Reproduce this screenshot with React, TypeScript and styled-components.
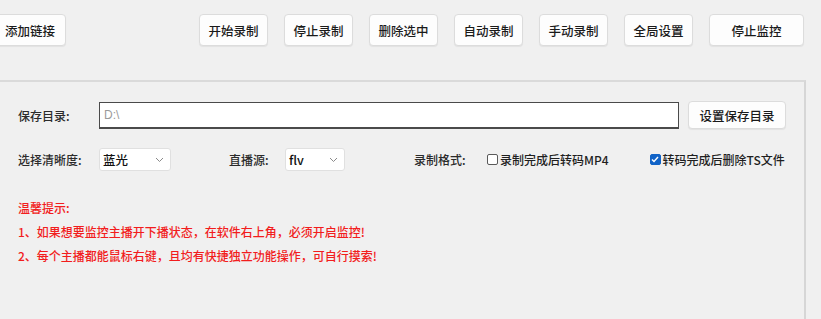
import styled, { createGlobalStyle } from 'styled-components';

const GlobalStyle = createGlobalStyle`
  html, body {
    margin: 0;
    padding: 0;
    background: #f0f0f0;
    overflow: hidden;
  }
  body {
    font-family: "Noto Sans CJK SC", "Microsoft YaHei", "Liberation Sans", sans-serif;
    font-size: 12px;
    color: #1f1f1f;
  }
`;

const Window = styled.div`
  width: 821px;
  height: 319px;
  background: #f0f0f0;
  display: flex;
  flex-direction: column;
  overflow: hidden;
`;

const Toolbar = styled.div`
  height: 80px;
  display: flex;
  align-items: flex-start;
  padding-top: 14px;
  box-sizing: border-box;
`;

const ToolGroup = styled.div`
  display: flex;
  gap: 16px;
  margin-left: auto;
  margin-right: 17px;
`;

const ToolButton = styled.button<{ $width?: number }>`
  width: ${({ $width }) => $width ?? 69}px;
  height: 32px;
  padding: 0;
  background: #fdfdfd;
  border: 1px solid #dcdcdc;
  border-radius: 4px;
  box-shadow: 0 1px 1px rgba(0, 0, 0, 0.06);
  font-family: inherit;
  font-size: 12.5px;
  font-weight: 500;
  color: #1a1a1a;
  cursor: pointer;
`;

const LeadButton = styled(ToolButton)`
  margin-left: -6px;
`;

const Panel = styled.div`
  flex: 1;
  width: 806px;
  box-sizing: border-box;
  border-top: 2px solid #dadada;
  border-right: 2px solid #d6d6d6;
  padding: 19px 0 0 18px;
  display: flex;
  flex-direction: column;
`;

const Row = styled.div`
  display: flex;
  align-items: center;
`;

const Label = styled.span<{ $width: number }>`
  width: ${({ $width }) => $width}px;
  flex-shrink: 0;
  color: #2b2b2b;
  font-size: 12px;
  font-weight: 500;
`;

const PathInput = styled.div`
  width: 580px;
  height: 27px;
  box-sizing: border-box;
  background: #fff;
  border: 1px solid #4a4a4a;
  border-bottom-width: 2px;
  padding-left: 4px;
  display: flex;
  align-items: center;
  color: #9a9a9a;
  font-family: "Liberation Sans", "Noto Sans CJK SC", sans-serif;
  font-size: 12px;
`;

const SideButton = styled(ToolButton)`
  width: 98px;
  height: 28px;
  margin-left: 9px;
`;

const SelectRow = styled(Row)`
  margin-top: 19px;
`;

const Select = styled.div<{ $width: number; $gap: number }>`
  width: ${({ $width }) => $width}px;
  height: 23px;
  margin-right: ${({ $gap }) => $gap}px;
  box-sizing: border-box;
  background: #fff;
  border: 1px solid #e0e0e0;
  border-radius: 3px;
  padding: 0 6px 0 3px;
  display: flex;
  align-items: center;
  justify-content: space-between;
  font-size: 12.5px;
  font-weight: 500;
  color: #111;
`;

const Chevron = () => (
  <svg width="9" height="6" viewBox="0 0 9 6">
    <path d="M1 1l3.5 3.5L8 1" fill="none" stroke="#8a8a8a" strokeWidth="1" />
  </svg>
);

const CheckItem = styled.label<{ $gap: number }>`
  display: flex;
  align-items: center;
  margin-right: ${({ $gap }) => $gap}px;
  font-size: 12px;
  font-weight: 500;
  color: #1f1f1f;
`;

const Box = styled.span<{ $checked: boolean }>`
  width: 11px;
  height: 11px;
  box-sizing: border-box;
  margin-right: 2px;
  border-radius: 2px;
  display: flex;
  align-items: center;
  justify-content: center;
  border: 1px solid ${({ $checked }) => ($checked ? '#1163c7' : '#5a5a5a')};
  background: ${({ $checked }) => ($checked ? '#1163c7' : '#fff')};
`;

const Tips = styled.div`
  margin-top: 30px;
  display: flex;
  flex-direction: column;
  gap: 10px;
  color: #f21d1d;
  font-size: 12px;
  font-weight: 500;
  line-height: 14px;
`;

const Check = ({ checked, children, gap }: { checked: boolean; children: string; gap: number }) => (
  <CheckItem $gap={gap}>
    <Box $checked={checked}>
      {checked && (
        <svg width="8" height="7" viewBox="0 0 8 7">
          <path d="M1 3.5l2 2L7 1" fill="none" stroke="#fff" strokeWidth="1.4" />
        </svg>
      )}
    </Box>
    {children}
  </CheckItem>
);

const tools = ['开始录制', '停止录制', '删除选中', '自动录制', '手动录制', '全局设置'];

const App = () => (
  <>
    <GlobalStyle />
    <Window>
      <Toolbar>
        <LeadButton $width={72}>添加链接</LeadButton>
        <ToolGroup>
          {tools.map((t) => (
            <ToolButton key={t}>{t}</ToolButton>
          ))}
          <ToolButton $width={95}>停止监控</ToolButton>
        </ToolGroup>
      </Toolbar>
      <Panel>
        <Row>
          <Label $width={81}>保存目录:</Label>
          <PathInput>D:\</PathInput>
          <SideButton>设置保存目录</SideButton>
        </Row>
        <SelectRow>
          <Label $width={81}>选择清晰度:</Label>
          <Select $width={72} $gap={58}>
            蓝光
            <Chevron />
          </Select>
          <Label $width={56}>直播源:</Label>
          <Select $width={60} $gap={69}>
            flv
            <Chevron />
          </Select>
          <Label $width={73}>录制格式:</Label>
          <Check checked={false} gap={41}>
            录制完成后转码MP4
          </Check>
          <Check checked gap={0}>
            转码完成后删除TS文件
          </Check>
        </SelectRow>
        <Tips>
          <div>温馨提示:</div>
          <div>1、如果想要监控主播开下播状态，在软件右上角，必须开启监控!</div>
          <div>2、每个主播都能鼠标右键，且均有快捷独立功能操作，可自行摸索!</div>
        </Tips>
      </Panel>
    </Window>
  </>
);

export default App;
